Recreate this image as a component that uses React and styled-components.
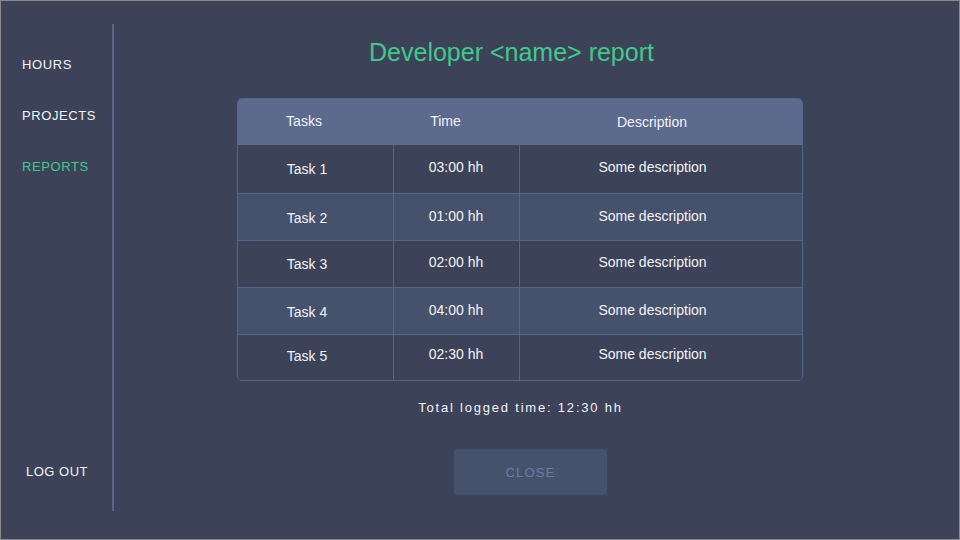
import React from 'react';
import styled, { createGlobalStyle } from 'styled-components';

const GlobalStyle = createGlobalStyle`
  * { box-sizing: border-box; }
  body {
    margin: 0;
    background: #3c4359;
    font-family: "Liberation Sans", Arial, sans-serif;
  }
`;

const tasks = [
  { name: 'Task 1', time: '03:00 hh', description: 'Some description' },
  { name: 'Task 2', time: '01:00 hh', description: 'Some description' },
  { name: 'Task 3', time: '02:00 hh', description: 'Some description' },
  { name: 'Task 4', time: '04:00 hh', description: 'Some description' },
  { name: 'Task 5', time: '02:30 hh', description: 'Some description' },
];

const heights = [49, 47, 47, 47, 45];
const lifts = [0, -2, 0, -2, 4];

const App = () => {
  return (
    <>
      <GlobalStyle />
      <Frame>
        <Sidebar>
          <Nav>
            <NavItem>HOURS</NavItem>
            <NavItem>PROJECTS</NavItem>
            <NavItem $active>REPORTS</NavItem>
          </Nav>
          <Logout>LOG OUT</Logout>
        </Sidebar>
        <Main>
          <Title>Developer &lt;name&gt; report</Title>
          <Table>
            <HeaderRow>
              <Cell $pad={22} $lift={1}>Tasks</Cell>
              <Cell $pad={22} $lift={1}>Time</Cell>
              <Cell $pad={18} $lift={-1}>Description</Cell>
            </HeaderRow>
            {tasks.map((task, i) => (
              <Row key={task.name} $striped={i % 2 === 1} $last={i === tasks.length - 1} style={{ height: heights[i] }}>
                <Cell $pad={16} $lift={lifts[i]} $divider>{task.name}</Cell>
                <Cell $pad={0} $lift={lifts[i] + 4} $divider>{task.time}</Cell>
                <Cell $pad={16} $lift={lifts[i] + 4}>{task.description}</Cell>
              </Row>
            ))}
          </Table>
          <Total>Total logged time: 12:30 hh</Total>
          <CloseButton type='button'>CLOSE</CloseButton>
        </Main>
      </Frame>
    </>
  );
};

const Frame = styled.div`
  width: 960px;
  height: 540px;
  border: 1px solid #8a8a8a;
  display: flex;
  background: #3c4359;
`;

const Sidebar = styled.aside`
  width: 113px;
  margin: 23px 0 28px;
  border-right: 2px solid #55668e;
  display: flex;
  flex-direction: column;
  justify-content: space-between;
`;

const Nav = styled.nav`
  display: flex;
  flex-direction: column;
  gap: 36px;
  padding: 33px 0 0 21px;
`;

const NavItem = styled.a`
  font-size: 13px;
  line-height: 15px;
  letter-spacing: 0.6px;
  color: ${(p) => (p.$active ? '#41c98a' : '#f2f3f7')};
  cursor: pointer;
`;

const Logout = styled.a`
  font-size: 13px;
  line-height: 15px;
  letter-spacing: 0.5px;
  color: #f2f3f7;
  padding: 0 0 32px 25px;
  cursor: pointer;
`;

const Main = styled.main`
  flex: 1;
  display: flex;
  flex-direction: column;
  align-items: center;
  padding: 36px 0 0 0;
`;

const Title = styled.h1`
  margin: 0 0 31px -50px;
  font-size: 25px;
  line-height: 30px;
  font-weight: 400;
  color: #41c98a;
`;

const Table = styled.div`
  width: 566px;
  margin-left: -34px;
  border: 1px solid #55668e;
  border-radius: 5px;
  overflow: hidden;
  display: flex;
  flex-direction: column;
`;

const HeaderRow = styled.div`
  display: grid;
  grid-template-columns: 157px 126px 1fr;
  height: 47px;
  background: #5c6a8e;
  color: #f2f3f7;
  margin: -1px -1px 0;
`;

const Row = styled.div`
  display: grid;
  grid-template-columns: 156px 126px 1fr;
  background: ${(p) => (p.$striped ? '#46526c' : '#3c4359')};
  border-bottom: ${(p) => (p.$last ? 'none' : '1px solid #55668e')};
  color: #f2f3f7;
`;

const Cell = styled.div`
  display: flex;
  align-items: center;
  justify-content: center;
  padding-right: ${(p) => p.$pad}px;
  padding-bottom: ${(p) => Math.max(p.$lift, 0)}px;
  padding-top: ${(p) => Math.max(-p.$lift, 0)}px;
  font-size: 14px;
  border-right: ${(p) => (p.$divider ? '1px solid #55668e' : 'none')};
`;

const Total = styled.div`
  margin: 19px 0 0 -32px;
  font-size: 13px;
  line-height: 16px;
  letter-spacing: 1.8px;
  color: #f2f3f7;
`;

const CloseButton = styled.button`
  margin: 33px 0 0 -12px;
  width: 153px;
  height: 46px;
  border: none;
  border-radius: 4px;
  background: #46526c;
  color: #6e7ba5;
  font-family: "Liberation Sans", Arial, sans-serif;
  font-size: 13px;
  letter-spacing: 1.2px;
  cursor: pointer;
`;

export default App;
